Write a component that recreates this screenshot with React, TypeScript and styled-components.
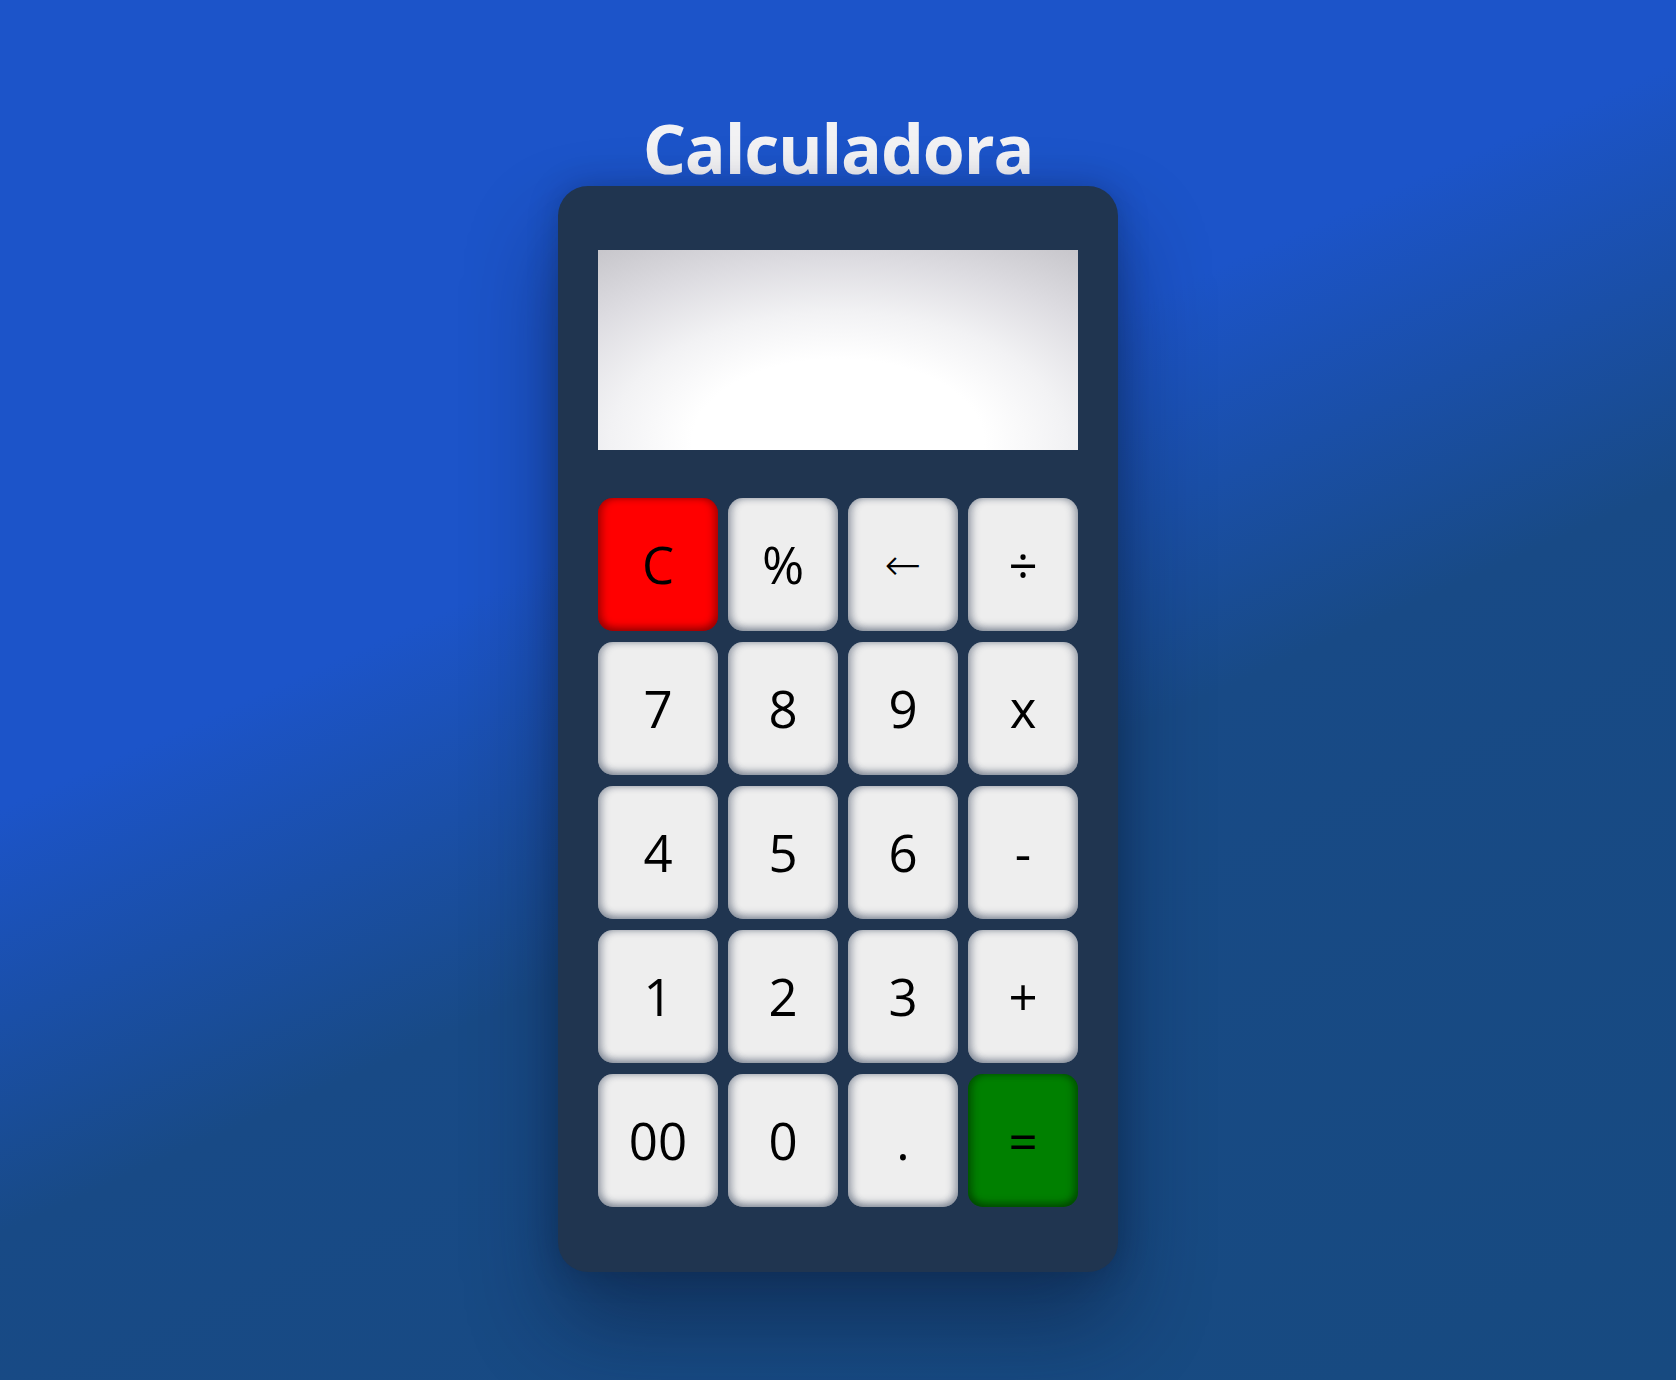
import React from "react";
import styled, { createGlobalStyle } from "styled-components";

const GlobalStyle = createGlobalStyle`
  html, body {
    margin: 0;
    padding: 0;
  }
  body {
    min-height: 100vh;
    background: linear-gradient(156deg, #1c54c9 38%, #184a86 58%, #174a80 100%);
    font-family: "Open Sans", "Noto Sans", sans-serif;
  }
`;

const Page = styled.main`
  min-height: 100vh;
  display: flex;
  flex-direction: column;
  align-items: center;
  padding-top: 110px;
  box-sizing: border-box;
`;

const Title = styled.h1`
  margin: 0;
  font-family: "Open Sans", "Noto Sans", sans-serif;
  font-weight: 700;
  font-size: 68px;
  line-height: 76px;
  letter-spacing: -1.2px;
  color: #f2f2f4;
`;

const Body = styled.section`
  width: 560px;
  box-sizing: border-box;
  padding: 64px 40px 65px;
  background: #203550;
  border-radius: 30px;
  box-shadow: 0 50px 90px rgba(8, 20, 45, 0.45), 0 0 30px rgba(8, 20, 45, 0.25);
  display: flex;
  flex-direction: column;
  gap: 48px;
`;

const Display = styled.div`
  height: 200px;
  background: radial-gradient(ellipse 95% 130% at 50% 96%, #ffffff 32%, #f2f2f4 50%, #dddce1 70%, #bdbcc1 100%);
`;

const Keys = styled.div`
  display: grid;
  grid-template-columns: 120px 110px 110px 110px;
  grid-auto-rows: 133px;
  column-gap: 10px;
  row-gap: 11px;
`;

type Variant = "plain" | "clear" | "equal";

const bg: Record<Variant, string> = {
  plain: "#eeeeee",
  clear: "#ff0000",
  equal: "#008000",
};

const edge: Record<Variant, string> = {
  plain: "rgba(40, 55, 80, 0.28)",
  clear: "rgba(90, 0, 0, 0.35)",
  equal: "rgba(0, 40, 0, 0.35)",
};

const Key = styled.button<{ $variant: Variant; $symbol?: boolean }>`
  border: none;
  margin: 0;
  padding: 0;
  border-radius: 15px;
  background: ${(p) => bg[p.$variant]};
  box-shadow: inset 0 -5px 7px ${(p) => edge[p.$variant]},
    inset 5px 0 7px ${(p) => edge[p.$variant]},
    inset -5px 0 7px ${(p) => edge[p.$variant]};
  display: flex;
  align-items: center;
  justify-content: center;
  font-family: ${(p) =>
    p.$symbol ? '"DejaVu Sans", sans-serif' : '"Open Sans", "Noto Sans", sans-serif'};
  font-size: ${(p) => (p.$symbol ? "44px" : "51px")};
  font-weight: ${(p) => (p.$symbol ? 300 : 400)};
  line-height: 1;
  color: #000000;
  cursor: pointer;
`;

const keys: { label: string; variant: Variant; symbol?: boolean }[] = [
  { label: "C", variant: "clear" },
  { label: "%", variant: "plain" },
  { label: "←", variant: "plain", symbol: true },
  { label: "÷", variant: "plain" },
  { label: "7", variant: "plain" },
  { label: "8", variant: "plain" },
  { label: "9", variant: "plain" },
  { label: "x", variant: "plain" },
  { label: "4", variant: "plain" },
  { label: "5", variant: "plain" },
  { label: "6", variant: "plain" },
  { label: "-", variant: "plain" },
  { label: "1", variant: "plain" },
  { label: "2", variant: "plain" },
  { label: "3", variant: "plain" },
  { label: "+", variant: "plain" },
  { label: "00", variant: "plain" },
  { label: "0", variant: "plain" },
  { label: ".", variant: "plain" },
  { label: "=", variant: "equal" },
];

export default function App() {
  return (
    <>
      <GlobalStyle />
      <Page>
        <Title>Calculadora</Title>
        <Body>
          <Display />
          <Keys>
            {keys.map((k) => (
              <Key key={k.label} $variant={k.variant} $symbol={k.symbol}>
                {k.label}
              </Key>
            ))}
          </Keys>
        </Body>
      </Page>
    </>
  );
}
